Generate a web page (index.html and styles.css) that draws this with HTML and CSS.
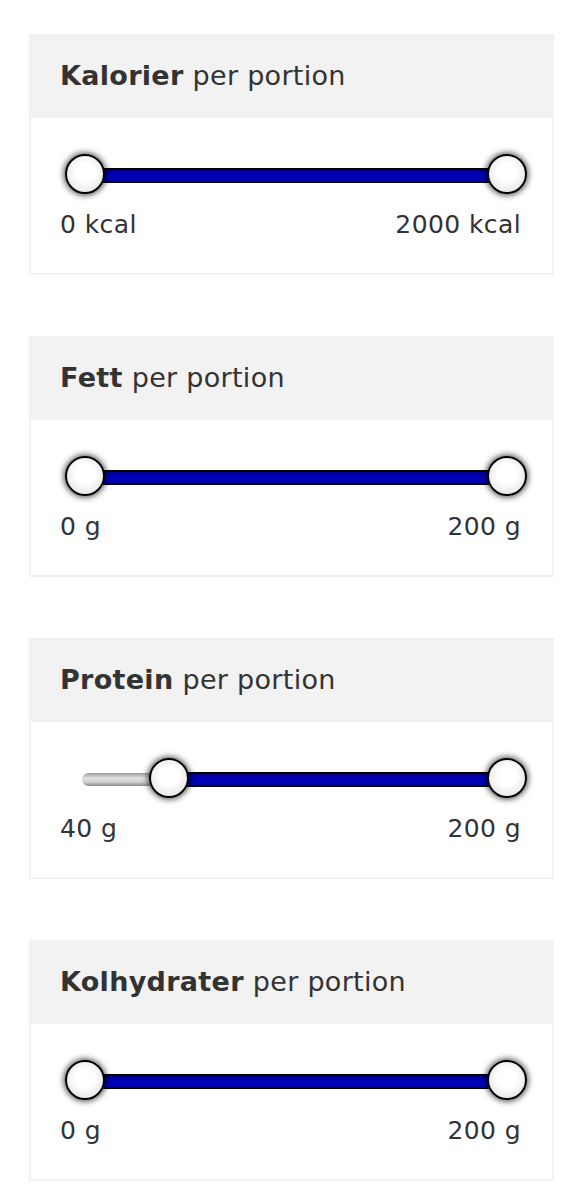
FILE: index.html
```html
<!DOCTYPE html>
<html lang="sv">
<head>
    <meta charset="UTF-8">
    <meta name="viewport" content="width=device-width, initial-scale=1.0">
    <title>Näringsfilter</title>
    <link rel="stylesheet" href="styles.css">
</head>
<body>
    <div class="filters">
        <div class="filter">
            <div class="filter-head"><strong>Kalorier</strong> per portion</div>
            <div class="filter-body">
                <div class="slider">
                    <div class="rail">
                        <div class="track">
                            <div class="range" style="left: 0%; right: 0%;"></div>
                            <span class="thumb" style="left: 0%;"></span>
                            <span class="thumb" style="left: 100%;"></span>
                        </div>
                    </div>
                </div>
                <div class="values"><span>0 kcal</span><span>2000 kcal</span></div>
            </div>
        </div>

        <div class="filter">
            <div class="filter-head"><strong>Fett</strong> per portion</div>
            <div class="filter-body">
                <div class="slider">
                    <div class="rail">
                        <div class="track">
                            <div class="range" style="left: 0%; right: 0%;"></div>
                            <span class="thumb" style="left: 0%;"></span>
                            <span class="thumb" style="left: 100%;"></span>
                        </div>
                    </div>
                </div>
                <div class="values"><span>0 g</span><span>200 g</span></div>
            </div>
        </div>

        <div class="filter">
            <div class="filter-head"><strong>Protein</strong> per portion</div>
            <div class="filter-body">
                <div class="slider">
                    <div class="rail">
                        <div class="track">
                            <div class="range" style="left: 20%; right: 0%;"></div>
                            <span class="thumb" style="left: 20%;"></span>
                            <span class="thumb" style="left: 100%;"></span>
                        </div>
                    </div>
                </div>
                <div class="values"><span>40 g</span><span>200 g</span></div>
            </div>
        </div>

        <div class="filter">
            <div class="filter-head"><strong>Kolhydrater</strong> per portion</div>
            <div class="filter-body">
                <div class="slider">
                    <div class="rail">
                        <div class="track">
                            <div class="range" style="left: 0%; right: 0%;"></div>
                            <span class="thumb" style="left: 0%;"></span>
                            <span class="thumb" style="left: 100%;"></span>
                        </div>
                    </div>
                </div>
                <div class="values"><span>0 g</span><span>200 g</span></div>
            </div>
        </div>
    </div>
</body>
</html>
```

FILE: styles.css
```css
body {
    margin: 0;
    padding: 0;
    background: #fff;
    color: #333;
    font-family: "DejaVu Sans", "Liberation Sans", sans-serif;
}

.filters {
    width: 525px;
    padding: 34px 0 0 29px;
}

.filter {
    margin-bottom: 61px;
}

.filter-head {
    height: 84px;
    display: flex;
    align-items: center;
    padding: 0 31px 2px;
    box-sizing: border-box;
    background: #f2f2f2;
    font-size: 27px;
    letter-spacing: 0.3px;
}

.filter-head strong {
    margin-right: 9px;
}

.filter-body {
    height: 157px;
    box-sizing: border-box;
    border: 2px solid #f2f2f2;
    border-top: none;
    padding: 36px 31px 0 29px;
}

.slider {
    height: 40px;
    margin: 0 -6px 0 5px;
    padding: 0 17px;
}

/* grey rail, seen only where the range does not cover it */
.rail {
    position: relative;
    top: 15px;
    height: 13px;
    border-radius: 7px;
    background: linear-gradient(#9a9a9a, #e4e4e4 40%, #cfcfcf 70%, #8a8a8a);
}

.track {
    position: absolute;
    top: 0;
    bottom: 0;
    left: 3px;
    right: 3px;
}

.range {
    position: absolute;
    top: -1px;
    bottom: -1px;
    border: 2px solid #000;
    background: linear-gradient(#00008a, #0000c0 45%, #0000a8);
}

.thumb {
    position: absolute;
    top: 50%;
    width: 36px;
    height: 36px;
    margin: -22px 0 0 -20px;
    border: 2px solid #000;
    border-radius: 50%;
    background: radial-gradient(circle at 50% 45%, #fff 35%, #e8e8e8 75%, #cfcfcf);
    box-shadow: 0 0 6px 1px rgba(0, 0, 0, 0.75);
}

.values {
    display: flex;
    justify-content: space-between;
    margin-top: 16px;
    font-size: 25px;
    line-height: 30px;
    letter-spacing: 0.4px;
}
```
